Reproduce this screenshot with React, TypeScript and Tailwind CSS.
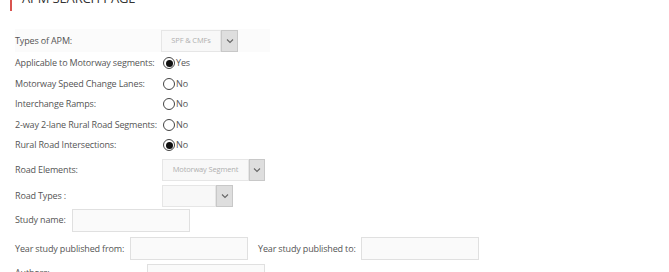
import React from "react";

function Chevron() {
  return (
    <svg width="8" height="6" viewBox="0 0 8 6" fill="none">
      <path d="M1 1.5 L4 4.5 L7 1.5" stroke="#666" strokeWidth="1.1" />
    </svg>
  );
}

function Select({ text, boxW, arrowW }: { text: string; boxW: number; arrowW: number }) {
  return (
    <div className="flex h-[22px]">
      <div
        className="flex items-center justify-center border border-[#e6e6e6] bg-[#f8f8f8] text-[7.5px] text-[#b0b0b0]"
        style={{ width: boxW }}
      >
        {text}
      </div>
      <div
        className="flex items-center justify-center border border-[#c8c8c8] bg-[#dedede]"
        style={{ width: arrowW }}
      >
        <Chevron />
      </div>
    </div>
  );
}

function Radio({ checked, label }: { checked: boolean; label: string }) {
  return (
    <div className="flex items-center gap-[1px]">
      <span className="flex h-[12px] w-[12px] items-center justify-center rounded-full border border-[#444] bg-white">
        {checked && <span className="h-[7px] w-[7px] rounded-full bg-[#111]" />}
      </span>
      <span className="text-[9px] text-[#555]">{label}</span>
    </div>
  );
}

function Input({ w }: { w: number }) {
  return <div className="h-[23px] border border-[#e0e0e0] bg-[#fafafa]" style={{ width: w }} />;
}

export default function App() {
  const radios = [
    { label: "Applicable to Motorway segments:", checked: true, value: "Yes", h: "h-[22px]" },
    { label: "Motorway Speed Change Lanes:", checked: false, value: "No", h: "h-[20px]" },
    { label: "Interchange Ramps:", checked: false, value: "No", h: "h-[20px]" },
    { label: "2-way 2-lane Rural Road Segments:", checked: false, value: "No", h: "h-[21px]" },
    { label: "Rural Road Intersections:", checked: true, value: "No", h: "h-[20px]" },
  ];

  return (
    <div className="h-[272px] w-[669px] overflow-hidden bg-white font-['Open_Sans',sans-serif] text-[9px] tracking-[-0.15px] text-[#555]">
      <div className="-mt-[10px] ml-[10px] flex h-[21px] items-start border-l-2 border-[#d9534f] pl-[10px] text-[13px] uppercase leading-[16px] text-[#333]">
        APM Search Page
      </div>

      <div className="mt-[18px] flex w-[270px] flex-col pl-[15px]">
        <div className="flex h-[23px] items-center bg-[#fbfbfb]">
          <span className="w-[146px]">Types of APM:</span>
          <Select text="SPF & CMFs" boxW={60} arrowW={17} />
        </div>

        {radios.map((r) => (
          <div key={r.label} className={`flex items-center ${r.h}`}>
            <span className="w-[148px]">{r.label}</span>
            <Radio checked={r.checked} label={r.value} />
          </div>
        ))}

        <div className="flex h-[30px] items-center">
          <span className="w-[147px]">Road Elements:</span>
          <Select text="Motorway Segment" boxW={87} arrowW={16} />
        </div>

        <div className="flex h-[22px] items-center">
          <span className="w-[147px]">Road Types :</span>
          <Select text="" boxW={54} arrowW={17} />
        </div>
      </div>

      <div className="flex flex-col pl-[15px]">
        <div className="flex h-[26px] items-center">
          <span className="w-[57px]">Study name:</span>
          <Input w={118} />
        </div>
        <div className="mt-[2px] flex h-[27px] items-center">
          <span className="w-[115px]">Year study published from:</span>
          <Input w={118} />
          <span className="ml-[10px] w-[103px]">Year study published to:</span>
          <Input w={118} />
        </div>
        <div className="flex items-start pt-[2px]">
          <span className="w-[132px] pt-[2px]">Authors:</span>
          <Input w={118} />
        </div>
      </div>
    </div>
  );
}
